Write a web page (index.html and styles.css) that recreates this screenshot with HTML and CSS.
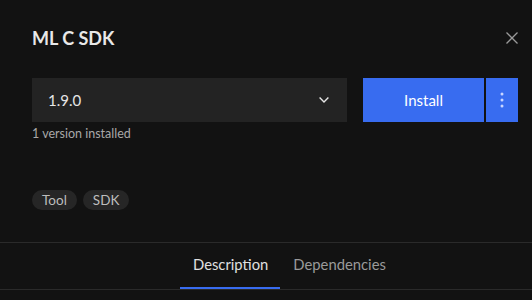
FILE: index.html
```html
<!DOCTYPE html>
<html lang="en">
<head>
    <meta charset="UTF-8">
    <meta name="viewport" content="width=device-width, initial-scale=1.0">
    <title>ML C SDK</title>
    <link rel="stylesheet" href="styles.css">
</head>
<body>
    <div class="dialog">
        <div class="body">
            <div class="header">
                <h2 class="title">ML C SDK</h2>
                <button class="close" aria-label="Close">
                    <svg width="12" height="12" viewBox="0 0 12 12"><path d="M0.5 0.5L11.5 11.5M11.5 0.5L0.5 11.5" stroke="#9a9a9a" stroke-width="1.3" fill="none"/></svg>
                </button>
            </div>
            <div class="controls">
                <div class="select">
                    <span>1.9.0</span>
                    <svg width="10" height="6" viewBox="0 0 10 6"><path d="M0.6 0.6L5 5L9.4 0.6" stroke="#e6e6e6" stroke-width="1.4" fill="none"/></svg>
                </div>
                <button class="btn install">Install</button>
                <button class="btn more" aria-label="More">
                    <svg width="4" height="16" viewBox="0 0 4 16"><circle cx="2" cy="2" r="1.5" fill="#c9d6ff"/><circle cx="2" cy="8" r="1.5" fill="#c9d6ff"/><circle cx="2" cy="14" r="1.5" fill="#c9d6ff"/></svg>
                </button>
            </div>
            <div class="note">1 version installed</div>
            <div class="tags">
                <span class="tag">Tool</span>
                <span class="tag">SDK</span>
            </div>
        </div>
        <div class="tabs">
            <a href="#" class="tab active">Description</a>
            <a href="#" class="tab">Dependencies</a>
        </div>
    </div>
</body>
</html>
```

FILE: styles.css
```css
body {
    margin: 0;
    background-color: #121212;
    font-family: Lato, "Noto Sans", sans-serif;
    color: #e6e6e6;
}
.body {
    padding: 26px 14px 0 32px;
}
.header {
    display: flex;
    justify-content: space-between;
    align-items: center;
    height: 24px;
}
.title {
    margin: 0;
    font-size: 18px;
    font-weight: 700;
    color: #e8e8e8;
}
.close {
    background: none;
    border: none;
    padding: 0;
    width: 12px;
    height: 12px;
    display: flex;
}
.controls {
    display: flex;
    margin-top: 28px;
    height: 44px;
}
.select {
    width: 315px;
    background-color: #232323;
    display: flex;
    align-items: center;
    justify-content: space-between;
    padding: 0 18px 0 16px;
    box-sizing: border-box;
    font-size: 15px;
    color: #e6e6e6;
}
.btn {
    border: none;
    background-color: #386cf0;
    color: #ffffff;
    font-family: inherit;
    font-size: 15px;
    padding: 0;
    display: flex;
    align-items: center;
    justify-content: center;
}
.install {
    width: 121px;
    margin-left: 16px;
}
.more {
    width: 32px;
    margin-left: 2px;
}
.note {
    margin-top: 4px;
    font-size: 12.5px;
    line-height: 16px;
    color: #a8a8a8;
}
.tags {
    display: flex;
    gap: 6px;
    margin-top: 48px;
}
.tag {
    height: 20px;
    line-height: 20px;
    padding: 0 10px;
    border-radius: 10px;
    background-color: #262626;
    font-size: 13.5px;
    color: #bdbdbd;
}
.tabs {
    margin-top: 32px;
    border-top: 1px solid #2a2a2a;
    border-bottom: 1px solid #2a2a2a;
    display: flex;
    padding-left: 180px;
    height: 46px;
}
.tab {
    display: flex;
    align-items: center;
    padding: 0 12px 3px 13px;
    font-size: 14.8px;
    text-decoration: none;
    color: #9a9a9a;
    border-bottom: 2px solid transparent;
}
.tab.active {
    color: #e0e0e0;
    border-bottom-color: #386cf0;
}
```
